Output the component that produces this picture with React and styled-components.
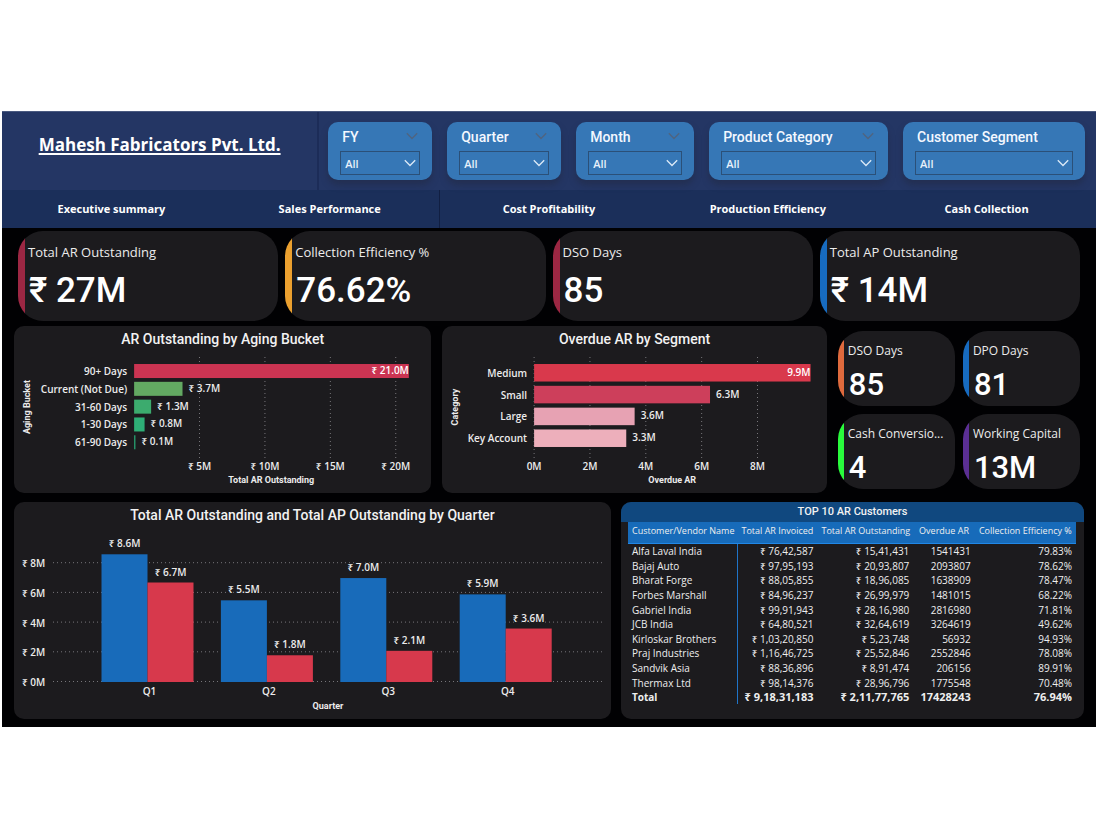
import React from "react";
import styled, { createGlobalStyle } from "styled-components";

const sans = '"Open Sans", "Noto Sans", sans-serif';
const din = 'Roboto, "Noto Sans", sans-serif';

const GlobalStyle = createGlobalStyle`
  *, *::before, *::after { box-sizing: border-box; }
  body { margin: 0; background: #ffffff; font-family: ${sans}; color: #f3f3f3; }
  h1, h2, p { margin: 0; }
`;

const Dashboard = styled.main`
  margin: 111px 4px 0 2px;
  background: #010103;
  padding-bottom: 8px;
`;

const Header = styled.header`
  display: flex;
  min-height: 79px;
  background: #243664;
  border-top: 1px solid #4a5a80;
`;

const TitleArea = styled.div`
  flex: 0 0 29%;
  display: flex;
  justify-content: center;
  align-items: flex-start;
  padding-top: 20px;
  border-right: 2px solid #1c2c58;
`;

const Title = styled.h1`
  font: 700 17px/26px ${sans};
  color: #ffffff;
  text-decoration: underline;
  text-decoration-thickness: 2px;
  text-underline-offset: 2px;
  white-space: nowrap;
`;

const Slicers = styled.form`
  flex: 1;
  display: grid;
  grid-template-columns: 104fr 114fr 118fr 179fr 182fr;
  gap: 15px;
  padding: 10px 11px 10px 9px;
`;

const SlicerBox = styled.div`
  height: 58px;
  padding: 4px 12px 0;
  border-radius: 10px;
  background: #3677b6;
  box-shadow: 0 5px 6px #232f52;
`;

const SlicerHead = styled.div`
  display: flex;
  justify-content: space-between;
  align-items: flex-start;
  padding: 1px 2px 0;
  height: 25px;

  svg { margin-top: 5px; }
`;

const SlicerLabel = styled.label`
  font: 500 14px/20px ${din};
  color: #f4f8ff;
  white-space: nowrap;
`;

const SelectWrap = styled.div`
  position: relative;

  svg { position: absolute; right: 4px; top: 8px; pointer-events: none; }
`;

const Select = styled.select`
  display: block;
  width: 100%;
  height: 24px;
  padding: 1px 4px 0;
  border: 1px solid #2b5078;
  border-radius: 0;
  appearance: none;
  background: transparent;
  color: #e8f1fa;
  font: 600 11px/20px ${sans};
`;

const Nav = styled.nav`
  display: grid;
  grid-template-columns: repeat(5, 1fr);
  height: 38px;
  background: #1b2f5a;
`;

const NavLink = styled.a`
  display: flex;
  align-items: center;
  justify-content: center;
  border-right: ${(p) => (p.$divided ? "1px solid #111f42" : "0")};
  color: #ffffff;
  font: 700 11px/16px ${sans};
  text-decoration: none;
`;

const KpiRow = styled.section`
  display: grid;
  grid-template-columns: repeat(4, 1fr);
  gap: 7px;
  padding: 3px 16px 0;
`;

/* The accent is a straight-edged strip that the card's round corners clip. */
const Card = styled.article`
  height: ${(p) => (p.$small ? 75 : 90)}px;
  padding: ${(p) => (p.$small ? "10px 8px 0 10px" : "11px 8px 0 10px")};
  border-radius: 25px;
  overflow: hidden;
  background: linear-gradient(
    to right,
    ${(p) => p.$accent} ${(p) => (p.$small ? 6 : 7)}px,
    #1c1b1e ${(p) => (p.$small ? 6 : 7)}px
  );
`;

const CardLabel = styled.p`
  font: 400 ${(p) => (p.$small ? 12 : 13)}px/20px ${sans};
  color: #ececec;
  white-space: nowrap;
`;

const CardValue = styled.p`
  margin-top: ${(p) => (p.$small ? 4 : 9)}px;
  padding-left: 1px;
  font: 500 ${(p) => (p.$small ? 31 : 35)}px/40px ${din};
  color: #ffffff;
  white-space: nowrap;
`;

const ChartRow = styled.section`
  display: grid;
  grid-template-columns: 417fr 384fr 242fr;
  column-gap: 11px;
  padding: 5px 16px 0 12px;
`;

const BottomRow = styled.section`
  display: grid;
  grid-template-columns: 597fr 463fr;
  gap: 10px;
  padding: 9px 12px 0;
`;

const MiniGrid = styled.div`
  display: grid;
  grid-template-columns: 1fr 1fr;
  gap: 8px;
  align-content: start;
  padding-top: 5px;
`;

const Panel = styled.article`
  border-radius: 10px;
  overflow: hidden;
  background: #1c1b1e;
`;

const PanelTitle = styled.h2`
  font: 500 14px/26px ${din};
  color: #f2f2f2;
  text-align: center;
`;

const ChartSvg = styled.svg`
  display: block;
  width: 100%;
  height: auto;

  text {
    font: 600 10px ${sans};
    fill: #ececec;
    paint-order: stroke;
    stroke: #1c1b1e;
    stroke-width: 2px;
  }
  .inside { stroke: none; fill: #ffffff; }
  .axis { font: 700 9px ${din}; }
  .grid { stroke: #77767a; stroke-width: 1; stroke-dasharray: 1 3; }
`;

const TableTitle = styled(PanelTitle)`
  font-size: 11px;
  line-height: 20px;
  background: #10487f;
`;

const TableWrap = styled.div`
  padding: 0 8px 15px 7px;
`;

const Table = styled.table`
  width: 100%;
  height: 182px;
  border-collapse: collapse;
  table-layout: fixed;
  font: 500 10px/14px ${sans};
  color: #eeeeee;

  th, td { padding: 0 4px; text-align: right; white-space: nowrap; }
  th:first-child, td:first-child { text-align: left; }
  thead th {
    height: 21px;
    padding-bottom: 2px;
    background: #176bba;
    border-bottom: 1px solid #2087e6;
    font-size: 9px;
    font-weight: 500;
    text-align: center;
  }
  tbody th, tfoot th { font-weight: 500; border-right: 1px solid #1f74c8; }
  tfoot th, tfoot td { font-weight: 700; font-size: 11px; }
  tfoot th { font-size: 10px; }
`;

const Chevron = ({ color }) => (
  <svg width="12" height="8" viewBox="0 0 12 8" fill="none" stroke={color} strokeWidth="1.3" aria-hidden="true">
    <path d="M0.8 1.2 6 6.5 11.2 1.2" />
  </svg>
);

function Slicer({ id, label, marker = true }) {
  return (
    <SlicerBox>
      <SlicerHead>
        <SlicerLabel htmlFor={id}>{label}</SlicerLabel>
        {marker && <Chevron color="#50647f" />}
      </SlicerHead>
      <SelectWrap>
        <Select id={id} defaultValue="All"><option>All</option></Select>
        <Chevron color="#dceaf7" />
      </SelectWrap>
    </SlicerBox>
  );
}

const Kpi = ({ label, value, accent, small }) => (
  <Card $accent={accent} $small={small}>
    <CardLabel $small={small}>{label}</CardLabel>
    <CardValue $small={small}>{value}</CardValue>
  </Card>
);

function BarChart({ title, width, height, zero, unit, top, pitch, thick, ticks, data, format, xTitle, xTitleAt, yTitle }) {
  return (
    <Panel>
      <PanelTitle>{title}</PanelTitle>
      <ChartSvg viewBox={`0 0 ${width} ${height}`} role="img" aria-label={title}>
        {ticks.map((t) => (
          <line key={t} className="grid" x1={zero + t * unit} x2={zero + t * unit} y1="5" y2="106" />
        ))}
        {data.map((d, i) => {
          const y = top + i * pitch;
          const end = zero + d.value * unit;
          const mid = y + thick / 2 + 4;
          return (
            <g key={d.name}>
              <rect x={zero} y={y} width={d.value * unit} height={thick} fill={d.color} />
              <text x={zero - 7} y={mid} textAnchor="end">{d.name}</text>
              {i === 0 ? (
                <text className="inside" x={end} y={mid - 1} textAnchor="end">{format(d.value.toFixed(1))}</text>
              ) : (
                <text x={end + 6} y={mid - 1}>{format(d.value.toFixed(1))}</text>
              )}
            </g>
          );
        })}
        {ticks.map((t) => (
          <text key={t} x={zero + t * unit} y="118" textAnchor="middle">{format(t)}</text>
        ))}
        <text className="axis" x={xTitleAt} y="131" textAnchor="middle">{xTitle}</text>
        <text className="axis" transform="translate(16 55) rotate(-90)" textAnchor="middle">{yTitle}</text>
      </ChartSvg>
    </Panel>
  );
}

const rupees = (v) => `₹ ${v}M`;
const millions = (v) => `${v}M`;

const aging = [
  { name: "90+ Days", value: 21.0, color: "#cb3452" },
  { name: "Current (Not Due)", value: 3.7, color: "#63a962" },
  { name: "31-60 Days", value: 1.3, color: "#3cab6e" },
  { name: "1-30 Days", value: 0.8, color: "#2eae76" },
  { name: "61-90 Days", value: 0.1, color: "#27a070" },
];

const segments = [
  { name: "Medium", value: 9.9, color: "#d9394c" },
  { name: "Small", value: 6.3, color: "#cd3f5b" },
  { name: "Large", value: 3.6, color: "#e7a2b3" },
  { name: "Key Account", value: 3.3, color: "#edafbb" },
];

const quarters = [
  { name: "Q1", ar: 8.6, ap: 6.7 },
  { name: "Q2", ar: 5.5, ap: 1.8 },
  { name: "Q3", ar: 7.0, ap: 2.1 },
  { name: "Q4", ar: 5.9, ap: 3.6 },
];

function QuarterChart() {
  const base = 154;
  const unit = 14.85;
  const bar = 46;
  const title = "Total AR Outstanding and Total AP Outstanding by Quarter";
  return (
    <Panel>
      <PanelTitle>{title}</PanelTitle>
      <ChartSvg viewBox="0 0 597 191" role="img" aria-label={title}>
        {[8, 6, 4, 2, 0].map((t) => (
          <g key={t}>
            <line className="grid" x1="39" x2="590" y1={base - t * unit - 0.5} y2={base - t * unit - 0.5} />
            <text x="8" y={base - t * unit + 4}>{rupees(t)}</text>
          </g>
        ))}
        {quarters.map((q, i) => {
          const x = 87.5 + i * 119.4;
          return (
            <g key={q.name}>
              <rect x={x} y={base - q.ar * unit} width={bar} height={q.ar * unit} fill="#186bba" />
              <rect x={x + bar} y={base - q.ap * unit} width={bar} height={q.ap * unit} fill="#d7394c" />
              <text x={x + bar / 2} y={base - q.ar * unit - 7} textAnchor="middle">{rupees(q.ar.toFixed(1))}</text>
              <text x={x + bar * 1.5} y={base - q.ap * unit - 7} textAnchor="middle">{rupees(q.ap.toFixed(1))}</text>
              <text x={x + bar + 2} y="167" textAnchor="middle">{q.name}</text>
            </g>
          );
        })}
        <text className="axis" x="314" y="181" textAnchor="middle">Quarter</text>
      </ChartSvg>
    </Panel>
  );
}

const customers = [
  ["Alfa Laval India", "₹ 76,42,587", "₹ 15,41,431", "1541431", "79.83%"],
  ["Bajaj Auto", "₹ 97,95,193", "₹ 20,93,807", "2093807", "78.62%"],
  ["Bharat Forge", "₹ 88,05,855", "₹ 18,96,085", "1638909", "78.47%"],
  ["Forbes Marshall", "₹ 84,96,237", "₹ 26,99,979", "1481015", "68.22%"],
  ["Gabriel India", "₹ 99,91,943", "₹ 28,16,980", "2816980", "71.81%"],
  ["JCB India", "₹ 64,80,521", "₹ 32,64,619", "3264619", "49.62%"],
  ["Kirloskar Brothers", "₹ 1,03,20,850", "₹ 5,23,748", "56932", "94.93%"],
  ["Praj Industries", "₹ 1,16,46,725", "₹ 25,52,846", "2552846", "78.08%"],
  ["Sandvik Asia", "₹ 88,36,896", "₹ 8,91,474", "206156", "89.91%"],
  ["Thermax Ltd", "₹ 98,14,376", "₹ 28,96,796", "1775548", "70.48%"],
];

const columns = [
  ["Customer/Vendor Name", "24.4%"],
  ["Total AR Invoiced", "17.9%"],
  ["Total AR Outstanding", "21.4%"],
  ["Overdue AR", "13.7%"],
  ["Collection Efficiency %", "22.6%"],
];

const CustomerTable = () => (
  <Panel>
    <TableTitle id="customers">TOP 10 AR Customers</TableTitle>
    <TableWrap>
      <Table aria-labelledby="customers">
        <colgroup>{columns.map(([n, w]) => <col key={n} width={w} />)}</colgroup>
        <thead><tr>{columns.map(([n]) => <th key={n} scope="col">{n}</th>)}</tr></thead>
        <tbody>
          {customers.map(([name, ...cells]) => (
            <tr key={name}>
              <th scope="row">{name}</th>
              {cells.map((c) => <td key={c}>{c}</td>)}
            </tr>
          ))}
        </tbody>
        <tfoot>
          <tr>
            <th scope="row">Total</th>
            <td>₹ 9,18,31,183</td><td>₹ 2,11,77,765</td><td>17428243</td><td>76.94%</td>
          </tr>
        </tfoot>
      </Table>
    </TableWrap>
  </Panel>
);

export default function App() {
  return (
    <>
      <GlobalStyle />
      <Dashboard>
        <Header>
          <TitleArea><Title>Mahesh Fabricators Pvt. Ltd.</Title></TitleArea>
          <Slicers>
            <Slicer id="fy" label="FY" />
            <Slicer id="quarter" label="Quarter" />
            <Slicer id="month" label="Month" />
            <Slicer id="category" label="Product Category" />
            <Slicer id="segment" label="Customer Segment" marker={false} />
          </Slicers>
        </Header>
        <Nav>
          <NavLink href="#executive">Executive summary</NavLink>
          <NavLink href="#sales" $divided>Sales Performance</NavLink>
          <NavLink href="#cost">Cost Profitability</NavLink>
          <NavLink href="#production">Production Efficiency</NavLink>
          <NavLink href="#cash">Cash Collection</NavLink>
        </Nav>
        <KpiRow>
          <Kpi label="Total AR Outstanding" value="₹ 27M" accent="#9c2743" />
          <Kpi label="Collection Efficiency %" value="76.62%" accent="#eba02f" />
          <Kpi label="DSO Days" value="85" accent="#9c2743" />
          <Kpi label="Total AP Outstanding" value="₹ 14M" accent="#176bc0" />
        </KpiRow>
        <ChartRow>
          <BarChart
            title="AR Outstanding by Aging Bucket" width={417} height={141}
            zero={120} unit={13.07} top={12} pitch={17.8} thick={14}
            ticks={[5, 10, 15, 20]} data={aging} format={rupees}
            xTitle="Total AR Outstanding" xTitleAt={257} yTitle="Aging Bucket"
          />
          <BarChart
            title="Overdue AR by Segment" width={384} height={141}
            zero={92} unit={27.9} top={12} pitch={21.8} thick={17.5}
            ticks={[0, 2, 4, 6, 8]} data={segments} format={millions}
            xTitle="Overdue AR" xTitleAt={230} yTitle="Category"
          />
          <MiniGrid>
            <Kpi small label="DSO Days" value="85" accent="#df6a3d" />
            <Kpi small label="DPO Days" value="81" accent="#176bc0" />
            <Kpi small label="Cash Conversio..." value="4" accent="#29fb3c" />
            <Kpi small label="Working Capital" value="13M" accent="#5b2f94" />
          </MiniGrid>
        </ChartRow>
        <BottomRow>
          <QuarterChart />
          <CustomerTable />
        </BottomRow>
      </Dashboard>
    </>
  );
}
